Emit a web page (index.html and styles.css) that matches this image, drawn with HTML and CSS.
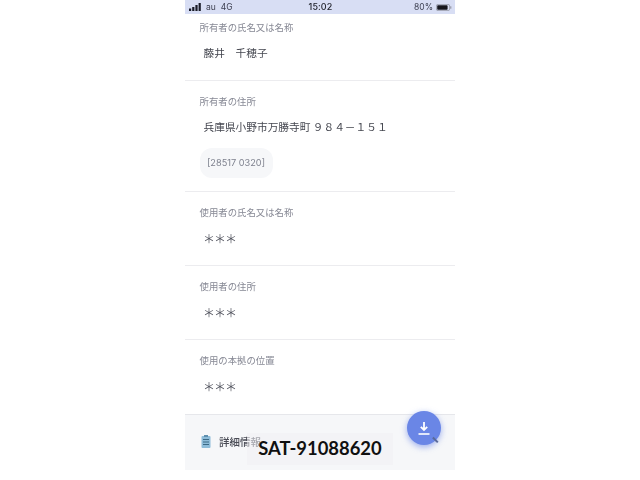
FILE: index.html
```html
<!DOCTYPE html>
<html lang="ja">
<head>
<meta charset="utf-8">
<title>詳細情報</title>
<link rel="stylesheet" href="styles.css">
</head>
<body>
<main class="phone">
  <div class="status">
    <div class="status-left">
      <svg class="signal" width="14" height="8" viewBox="0 0 14 8"><rect x="0" y="5.5" width="2.2" height="2.5"/><rect x="3.2" y="4" width="2.2" height="4"/><rect x="6.4" y="2" width="2.2" height="6"/><rect x="9.6" y="0" width="2.2" height="8"/></svg>
      <span class="carrier">au</span><span>4G</span>
    </div>
    <div class="status-time">15:02</div>
    <div class="status-right">
      <span>80%</span>
      <svg width="16" height="7" viewBox="0 0 16 7"><rect x="0.4" y="0.4" width="13.2" height="6.2" rx="1.5" fill="none" stroke="#8a8c99" stroke-width="0.7"/><rect x="1.2" y="1.2" width="10.4" height="4.6" rx="0.8" fill="#15151c"/><rect x="14.3" y="2.3" width="1" height="2.4" fill="#8a8c99"/></svg>
    </div>
  </div>

  <section class="row row-1">
    <div class="label">所有者の氏名又は名称</div>
    <div class="value">藤井　千穂子</div>
  </section>
  <section class="row row-2">
    <div class="label">所有者の住所</div>
    <div class="value">兵庫県小野市万勝寺町 ９８４－１５１</div>
    <div class="chip">[28517 0320]</div>
  </section>
  <section class="row row-3">
    <div class="label">使用者の氏名又は名称</div>
    <div class="value stars">＊＊＊</div>
  </section>
  <section class="row row-3">
    <div class="label">使用者の住所</div>
    <div class="value stars">＊＊＊</div>
  </section>
  <section class="row row-3 last">
    <div class="label">使用の本拠の位置</div>
    <div class="value stars">＊＊＊</div>
  </section>

  <footer class="footer">
    <svg class="doc" width="10" height="13" viewBox="0 0 10 13"><rect x="0.5" y="1" width="9" height="12" rx="1" fill="#8dbcd9"/><rect x="3" y="0" width="4" height="2" fill="#5f8fae"/><path d="M2 4.5h6M2 7h6M2 9.5h6" stroke="#3b6a87" stroke-width="1"/></svg>
    <span class="footer-title">詳細情報</span>
  </footer>

  <button class="fab" aria-label="ダウンロード">
    <svg width="14" height="15" viewBox="0 0 14 15"><path d="M7 1v7.5M3.8 5.8 7 9l3.2-3.2" fill="none" stroke="#fff" stroke-width="1.8"/><path d="M1.5 13h11" stroke="#fff" stroke-width="1.6"/></svg>
  </button>
  <i class="fab-tail"></i>
</main>
<div class="watermark">SAT-91088620</div>
</body>
</html>
```
FILE: styles.css
```css
* { box-sizing: border-box; }
html, body { margin: 0; padding: 0; background: #fff; }
body {
  width: 640px;
  height: 480px;
  position: relative;
  overflow: hidden;
  font-family: "Noto Sans CJK JP", "Noto Sans", sans-serif;
}
.phone {
  position: relative;
  width: 270px;
  height: 470px;
  margin-left: 185px;
  background: #fff;
  display: flex;
  flex-direction: column;
  filter: blur(0.5px);
}
.status {
  height: 14px;
  flex: none;
  background: #d8def4;
  color: #3e4152;
  font-family: "Inter", sans-serif;
  font-size: 8.5px;
  line-height: 14px;
  display: grid;
  grid-template-columns: 1fr auto 1fr;
  padding: 0 3px 0 4px;
}
.status-left { display: flex; align-items: center; gap: 5px; }
.signal { fill: #1a1c28; margin-right: -2px; }
.status-time { font-weight: 500; color: #23252f; font-size: 9px; letter-spacing: 0.1px; }
.status-right { display: flex; align-items: center; justify-content: flex-end; gap: 3px; }
.row { padding: 6px 14px 0 14.5px; border-bottom: 1px solid #ececef; flex: none; }
.row-1 { height: 67px; }
.row-2 { height: 111px; padding-top: 13px; }
.row-3 { height: 74px; padding-top: 13px; }
.row-3.last { height: 75px; border-bottom-color: #e6e7eb; }
.label { font-size: 9.4px; line-height: 15px; color: #868894; height: 15px; }
.value {
  font-size: 10.7px;
  line-height: 17px;
  color: #44464f;
  margin-top: 9px;
  padding-left: 4px;
  white-space: nowrap;
}
.row-2 .value { margin-top: 9px; }
.stars { font-size: 12px; color: #585a64; margin-top: 9px; line-height: 20px; letter-spacing: -1px; padding-left: 3.5px; }
.chip {
  width: 73px;
  height: 30px;
  margin-top: 13px;
  border-radius: 12px;
  background: #f6f7f9;
  color: #7e818e;
  font-family: "Inter", sans-serif;
  font-size: 9.2px;
  line-height: 30px;
  text-align: center;
}
.footer {
  flex: 1;
  background: #f6f7f9;
  display: flex;
  align-items: center;
  gap: 8px;
  padding: 0 0 2px 16px;
}
.doc { flex: none; }
.footer-title { font-size: 10.5px; font-weight: 500; color: #4a4c56; }
.fab {
  position: absolute;
  left: 222px;
  top: 411px;
  width: 34px;
  height: 34px;
  padding: 0;
  border: 0;
  border-radius: 50%;
  background: #6a86e6;
  box-shadow: 0 2px 6px rgba(106, 134, 230, 0.65);
  display: flex;
  align-items: center;
  justify-content: center;
}
.fab-tail {
  position: absolute;
  left: 247px;
  top: 439px;
  width: 7px;
  height: 1.5px;
  background: #5a6a9a;
  transform: rotate(45deg);
}
.watermark {
  position: absolute;
  left: 247px;
  top: 433px;
  width: 146px;
  height: 32px;
  background: rgba(240, 241, 244, 0.55);
  color: #101010;
  font-family: "Lato", sans-serif;
  font-weight: 700;
  font-size: 18.4px;
  line-height: 31px;
  text-align: center;
}
```
